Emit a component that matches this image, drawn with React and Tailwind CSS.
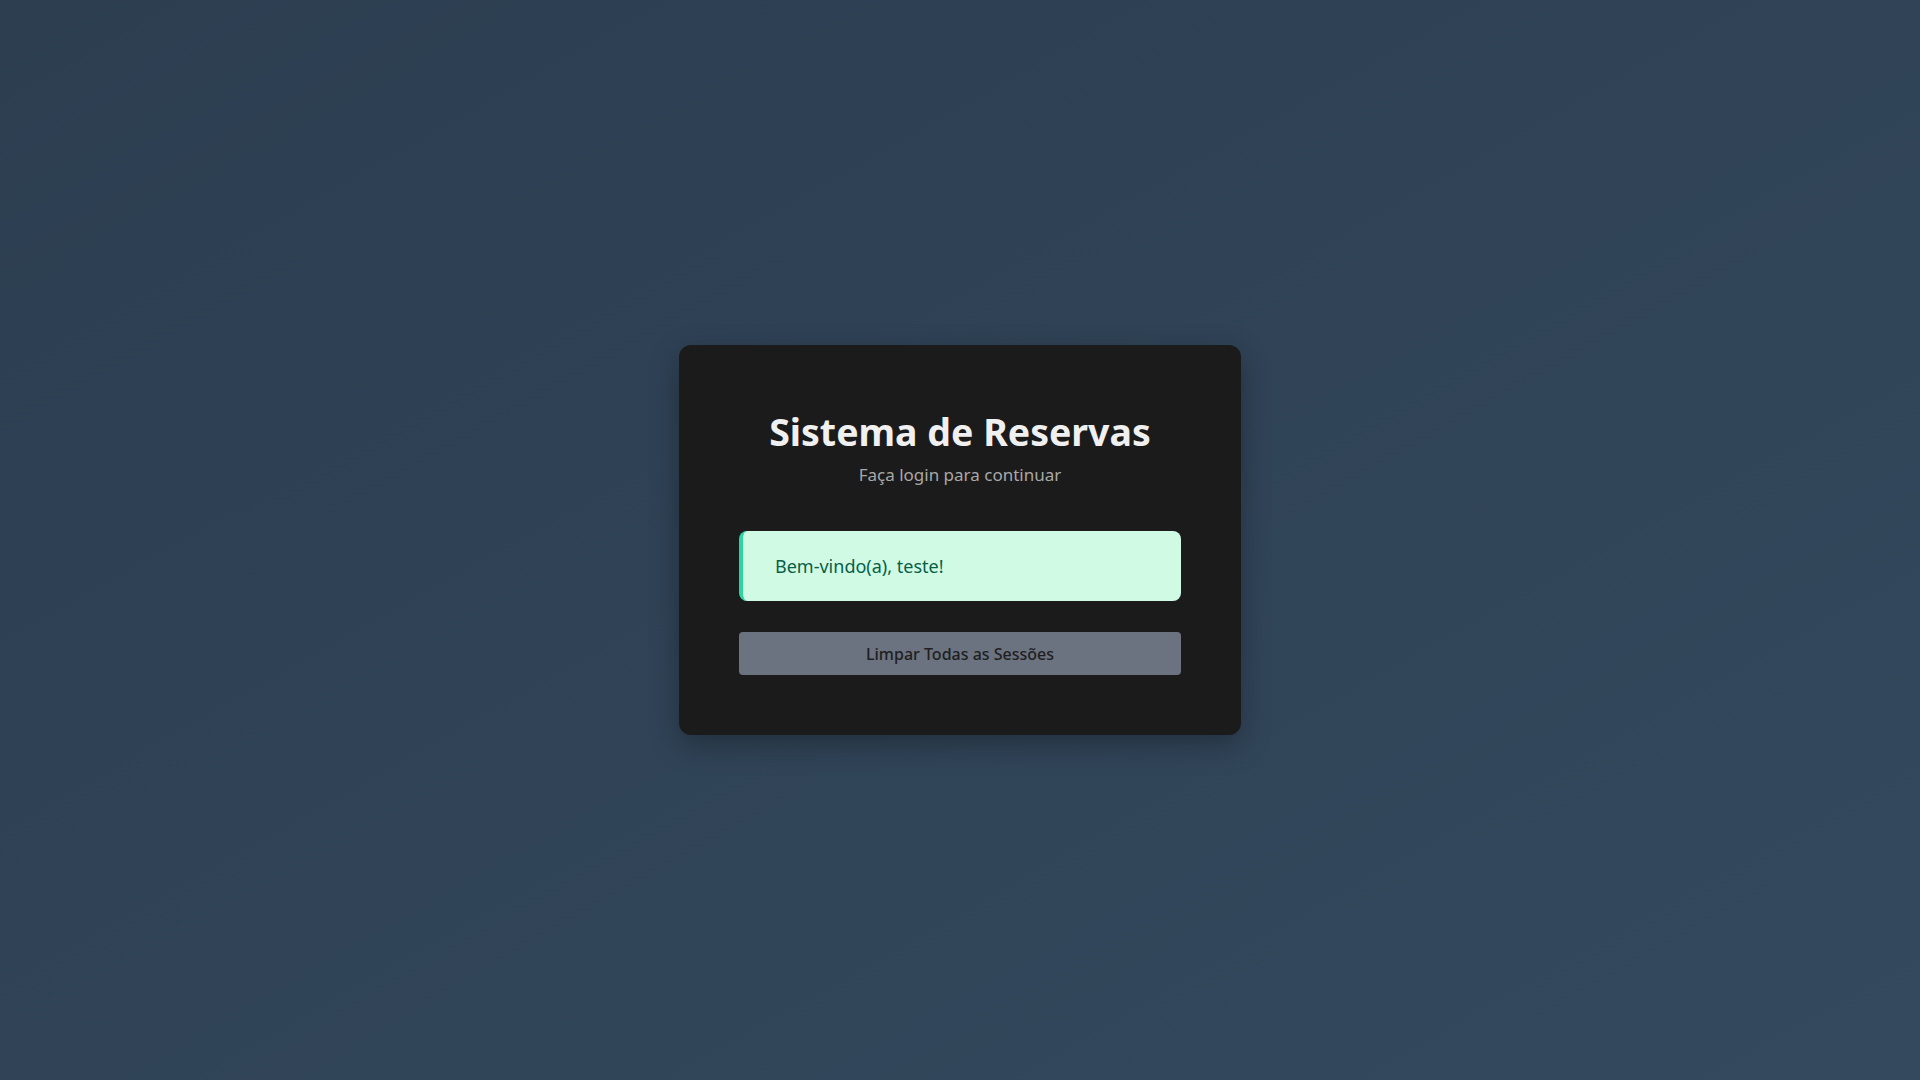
import React from "react";

export default function App() {
  return (
    <div className="min-h-screen w-full bg-gradient-to-br from-[#2c3e50] to-[#34495e] flex items-center justify-center font-['Noto_Sans','Open_Sans',sans-serif]">
      <div className="w-[562px] bg-[#1b1b1b] rounded-xl shadow-[0_10px_30px_rgba(0,0,0,0.3)] px-[60px] pt-[64px] pb-[60px]">
        <div className="text-center">
          <h1 className="text-[37.5px] leading-[46px] font-bold text-[#f0f0f0]">
            Sistema de Reservas
          </h1>
          <p className="mt-2 text-[17px] leading-6 text-[#a8a8a8]">
            Faça login para continuar
          </p>
        </div>

        <div className="mt-[44px] bg-[#d1fae5] border-l-4 border-[#2dd4a0] rounded-lg px-8 py-6 text-[18px] leading-[22px] text-[#065f46]">
          Bem-vindo(a), teste!
        </div>

        <button className="mt-[31px] w-full h-[43px] bg-[#6b7280] rounded text-base font-medium text-[#1f1f1f]">
          Limpar Todas as Sessões
        </button>
      </div>
    </div>
  );
}
